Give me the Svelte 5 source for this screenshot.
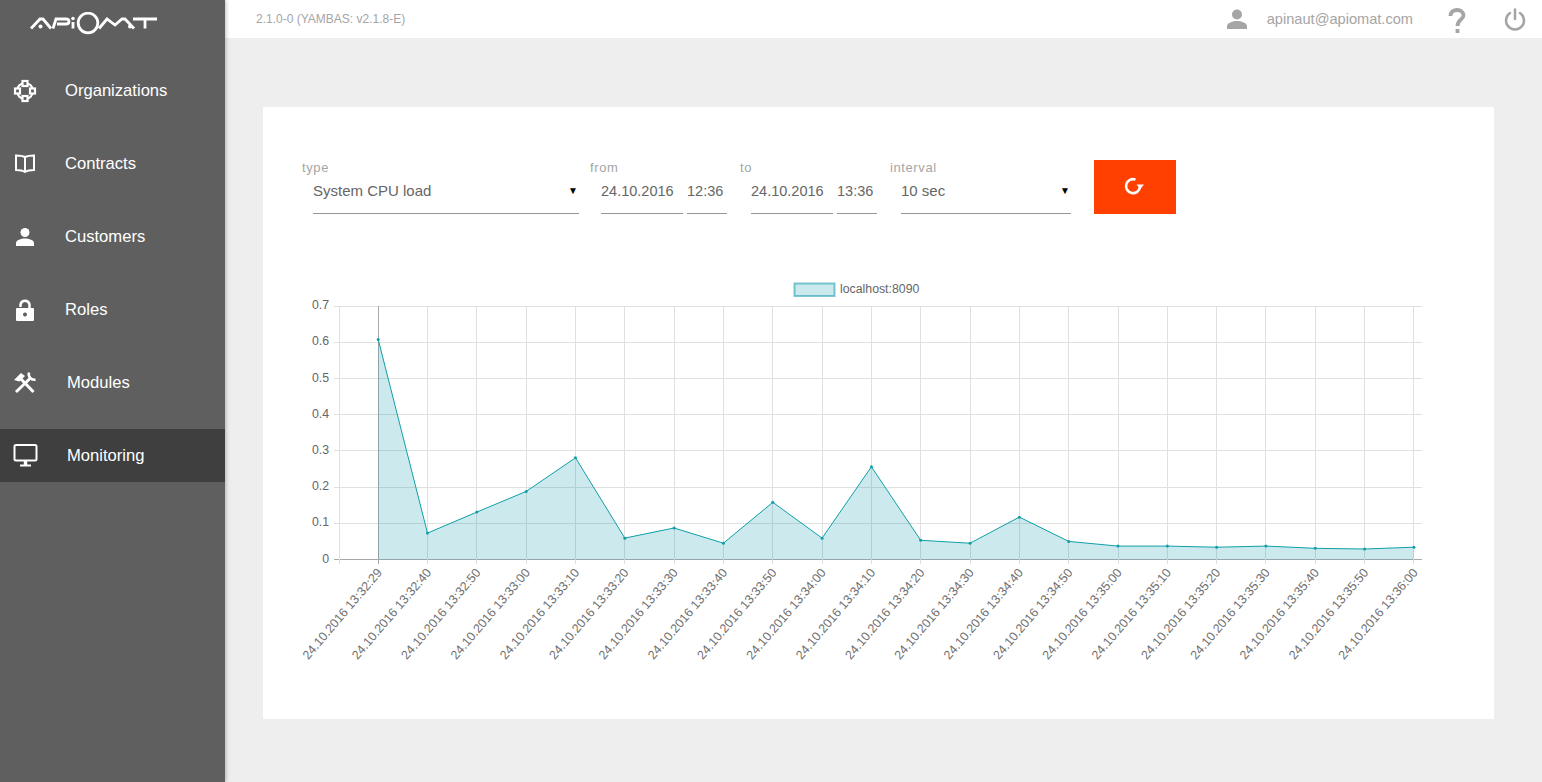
<script>
  const navItems = [
    { label: 'Organizations', icon: 'org' },
    { label: 'Contracts', icon: 'book' },
    { label: 'Customers', icon: 'user' },
    { label: 'Roles', icon: 'lock' },
    { label: 'Modules', icon: 'tools', shift: true },
    { label: 'Monitoring', icon: 'monitor', shift: true, active: true },
  ];

  const times = [
    '13:32:29', '13:32:40', '13:32:50', '13:33:00', '13:33:10', '13:33:20',
    '13:33:30', '13:33:40', '13:33:50', '13:34:00', '13:34:10', '13:34:20',
    '13:34:30', '13:34:40', '13:34:50', '13:35:00', '13:35:10', '13:35:20',
    '13:35:30', '13:35:40', '13:35:50', '13:36:00',
  ];
  const values = [
    0.608, 0.073, 0.131, 0.188, 0.281, 0.059, 0.087, 0.045, 0.158, 0.059, 0.256,
    0.053, 0.045, 0.117, 0.05, 0.037, 0.037, 0.034, 0.037, 0.031, 0.029, 0.034,
  ];

  const x0 = 115.2;
  const step = 49.32;
  const yZero = 296.5;
  const yUnit = 362;
  const xAt = (i) => x0 + i * step;
  const yAt = (v) => yZero - v * yUnit;
  // gridlines sit on whole pixels, as on a canvas chart
  const snap = (n) => Math.floor(n) + 0.5;

  const line = values.map((v, i) => `${xAt(i).toFixed(1)},${yAt(v).toFixed(1)}`).join(' ');
  const area = `${x0},${yZero} ${line} ${xAt(21).toFixed(1)},${yZero}`;
  const yTicks = [0.7, 0.6, 0.5, 0.4, 0.3, 0.2, 0.1, 0];
</script>

<div class="page">
  <aside class="sidebar">
    <div class="logo">
      <svg width="128" height="24" viewBox="0 0 128 24" fill="none" stroke="#fff" stroke-width="2.800">
        <path d="M1 16.500 L10 7 H13 L21 16.500" />
        <circle cx="10.500" cy="14.500" r="2" fill="#fff" stroke="none" />
        <path d="M23 16.500 L26 7 H36 Q39 7 39 9.500 Q39 12 36 12 H27" />
        <path d="M43 10 V16.500" />
        <circle cx="43" cy="6.500" r="1.800" fill="#fff" stroke="none" />
        <circle cx="58" cy="11" r="9.800" />
        <path d="M69 16.500 L77 7 L85 13 L92 7 H95 L104 16.500" />
        <circle cx="100" cy="14.500" r="2" fill="#fff" stroke="none" />
        <path d="M103 7 H127 M115 7 V16.500" />
      </svg>
    </div>
    <nav>
      {#each navItems as item}
        <a class="nav-item" class:active={item.active} class:shift={item.shift} href="#top">
          <span class="nav-icon">
            {#if item.icon === 'org'}
              <svg width="24" height="24" viewBox="0 0 24 24" fill="none" stroke="#fff" stroke-width="2.200">
                <circle cx="12" cy="12" r="8" />
                <rect x="9.500" y="2" width="5" height="5" fill="#5f5f5f" />
                <rect x="9.500" y="17" width="5" height="5" fill="#5f5f5f" />
                <rect x="2" y="9.500" width="5" height="5" fill="#5f5f5f" />
                <rect x="17" y="9.500" width="5" height="5" fill="#5f5f5f" />
              </svg>
            {:else if item.icon === 'book'}
              <svg width="24" height="24" viewBox="0 0 24 24" fill="none" stroke="#fff" stroke-width="2">
                <path d="M12 5 Q9 3.500 3 3.500 V18 Q9 18 12 20 Q15 18 21 18 V3.500 Q15 3.500 12 5 V20" />
              </svg>
            {:else if item.icon === 'user'}
              <svg width="24" height="24" viewBox="0 0 24 24" fill="#fff">
                <circle cx="12" cy="7.500" r="4.500" />
                <path d="M3 21 V18 C3 15 8 13.500 12 13.500 C16 13.500 21 15 21 18 V21 Z" />
              </svg>
            {:else if item.icon === 'lock'}
              <svg width="24" height="24" viewBox="0 0 24 24" fill="#fff">
                <path d="M7.500 9 V6.500 A4.600 4.600 0 0 1 16.500 6.500 V11" fill="none" stroke="#fff" stroke-width="2.500" />
                <path fill-rule="evenodd" d="M4 10 H20 Q21 10 21 11 V22 Q21 23 20 23 H4 Q3 23 3 22 V11 Q3 10 4 10 Z M12 14.500 A2 2 0 1 0 12.010 14.500 Z" />
              </svg>
            {:else if item.icon === 'tools'}
              <svg width="24" height="24" viewBox="0 0 24 24" fill="none" stroke="#fff" stroke-width="3">
                <path d="M3 21 L17 7.500" />
                <path d="M16 1.500 A5.500 5.500 0 0 0 22.500 8.500" stroke-width="2.500" />
                <path d="M8 8 L20.500 21" />
                <path d="M1 9 L8 2 L12 5 L6.500 10.500 Z" fill="#fff" stroke="none" />
              </svg>
            {:else}
              <svg width="26" height="24" viewBox="0 0 26 24" fill="none" stroke="#fff" stroke-width="2">
                <rect x="1.500" y="1" width="22" height="15.500" rx="1.500" />
                <path d="M12.500 17 V21" stroke-width="3.500" />
                <path d="M7 21.500 H18" />
              </svg>
            {/if}
          </span>
          <span class="nav-label">{item.label}</span>
        </a>
      {/each}
    </nav>
  </aside>

  <div class="main">
    <header class="topbar">
      <span class="version">2.1.0-0 (YAMBAS: v2.1.8-E)</span>
      <div class="top-right">
        <svg width="24" height="24" viewBox="0 0 24 24" fill="#a5a5a5">
          <circle cx="12" cy="7.500" r="5" />
          <path d="M2 22 V19 C2 16 8 14 12 14 C16 14 22 16 22 19 V22 Z" />
        </svg>
        <span class="email">apinaut@apiomat.com</span>
        <svg class="help" width="18" height="26" viewBox="0 0 18 26" fill="none" stroke="#a5a5a5" stroke-width="3.800">
          <path d="M2.500 8 C2.500 3.500 6 2 9 2 C13 2 15.500 4.500 15.500 7.500 C15.500 11.500 9.500 11.500 9.500 18" />
          <path d="M9.500 21 V25" />
        </svg>
        <svg width="24" height="24" viewBox="0 0 24 24" fill="none" stroke="#a5a5a5" stroke-width="2.500" stroke-linecap="round">
          <path d="M12 2.500 V12" />
          <path d="M7 6 A9 9 0 1 0 17 6" />
        </svg>
      </div>
    </header>

    <section class="card">
      <form class="filters">
        <div class="field type">
          <span class="caption">type</span>
          <div class="control select"><span>System CPU load</span><i class="arrow">▼</i></div>
        </div>
        <div class="field range from">
          <span class="caption">from</span>
          <div class="pair">
            <div class="control date">24.10.2016</div>
            <div class="control time">12:36</div>
          </div>
        </div>
        <div class="field range">
          <span class="caption">to</span>
          <div class="pair">
            <div class="control date">24.10.2016</div>
            <div class="control time">13:36</div>
          </div>
        </div>
        <div class="field interval">
          <span class="caption">interval</span>
          <div class="control select"><span>10 sec</span><i class="arrow">▼</i></div>
        </div>
        <button class="refresh" type="button" aria-label="refresh">
          <svg width="22" height="22" viewBox="0 0 22 22" fill="none" stroke="#fff" stroke-width="2.600">
            <path d="M17 12 A7 7 0 1 1 12.500 4.600" />
            <path d="M13.500 9.500 H21 L17.200 14 Z" fill="#fff" stroke="none" />
          </svg>
        </button>
      </form>

      <svg class="chart" width="1231" height="420" viewBox="0 0 1231 420">
        <rect x="531.500" y="20.500" width="40" height="12.500" fill="rgba(0,145,165,0.2)" stroke="rgba(0,145,165,0.5)" stroke-width="2" />
        <text x="577" y="30" class="tick">localhost:8090</text>

        {#each yTicks as t}
          <line x1="71" x2="1159" y1={snap(yAt(t))} y2={snap(yAt(t))} class:axis={t === 0} class="grid" />
          <text x="66" y={yAt(t) + 3} class="tick" text-anchor="end">{t}</text>
        {/each}
        <line x1="76.500" x2="76.500" y1="43" y2="301" class="grid" />
        {#each times as _, i}
          <line x1={snap(xAt(i))} x2={snap(xAt(i))} y1="43" y2="301" class="grid" class:axis={i === 0} />
        {/each}

        <polygon points={area} fill="rgba(0,150,170,0.2)" />
        <polyline points={line} fill="none" stroke="#0f9fa8" stroke-width="1" />
        {#each values as v, i}
          <circle cx={xAt(i)} cy={yAt(v)} r="1.500" fill="#0f9fa8" />
        {/each}

        {#each times as time, i}
          <text class="tick label" text-anchor="end" transform="translate({xAt(i) + 4.500},{310}) rotate(-49.500)">24.10.2016 {time}</text>
        {/each}
      </svg>
    </section>
  </div>
</div>

<style>
  :global(body) {
    margin: 0;
    background: #eee;
    font-family: "Liberation Sans", Arial, sans-serif;
  }
  .page {
    display: flex;
    height: 782px;
    overflow: hidden;
  }
  .sidebar {
    width: 225px;
    flex: none;
    background: #5f5f5f;
    box-shadow: 1px 0 4px rgba(0, 0, 0, 0.25);
    z-index: 1;
  }
  .logo {
    height: 64px;
    padding: 12px 0 0 30px;
    box-sizing: border-box;
  }
  nav {
    display: flex;
    flex-direction: column;
  }
  .nav-item {
    display: flex;
    align-items: center;
    height: 53px;
    margin-bottom: 20px;
    padding-left: 13px;
    color: #fff;
    font-size: 16.600px;
    text-decoration: none;
  }
  .nav-item.active {
    background: #3f3f3f;
  }
  .nav-icon {
    width: 52px;
    flex: none;
    display: flex;
  }
  .nav-item.shift .nav-icon {
    width: 54px;
  }
  .main {
    flex: 1;
    min-width: 0;
  }
  .topbar {
    height: 38px;
    background: #fff;
    display: flex;
    justify-content: space-between;
    align-items: center;
    padding: 0 15px 0 31px;
    color: #a5a5a5;
  }
  .version {
    font-size: 12px;
  }
  .top-right {
    display: flex;
    align-items: center;
  }
  .email {
    font-size: 14.600px;
    margin: 0 35px 0 18px;
  }
  .help {
    margin: 3px 37px 0 0;
  }
  .card {
    background: #fff;
    margin: 69px 48px 0 38px;
    height: 612px;
  }
  .filters {
    display: flex;
    align-items: flex-start;
    padding: 53px 0 0 39px;
    height: 54px;
  }
  .field {
    display: flex;
    flex-direction: column;
  }
  .caption {
    font-size: 13px;
    color: #a5a5a5;
    letter-spacing: 0.6px;
    height: 17px;
  }
  .control {
    height: 37px;
    line-height: 28px;
    box-sizing: border-box;
    border-bottom: 1px solid #969696;
    font-size: 14.500px;
    color: #666;
  }
  .select {
    margin-left: 11px;
    display: flex;
    justify-content: space-between;
    font-size: 15px;
  }
  .arrow {
    font-style: normal;
    font-size: 10px;
    color: #000;
    margin-right: 1px;
  }
  .type {
    width: 288px;
  }
  .type .select {
    width: 266px;
  }
  .range {
    width: 150px;
  }
  .pair {
    display: flex;
    gap: 4px;
    margin-left: 11px;
  }
  .date {
    width: 82px;
  }
  .time {
    width: 40px;
  }
  .interval {
    width: 204px;
  }
  .interval .select {
    width: 170px;
  }
  .refresh {
    width: 82px;
    height: 54px;
    border: 0;
    padding: 0 2px 2px 0;
    background: #ff4000;
    display: flex;
    align-items: center;
    justify-content: center;
  }
  .chart {
    display: block;
    margin-top: 49px;
  }
  .grid {
    stroke: #e0e0e0;
    stroke-width: 1;
  }
  .grid.axis {
    stroke: #a8a8a8;
  }
  .tick {
    font-size: 12.300px;
    fill: #666;
  }
  .label {
    font-size: 12.500px;
    fill: #707070;
  }
</style>
